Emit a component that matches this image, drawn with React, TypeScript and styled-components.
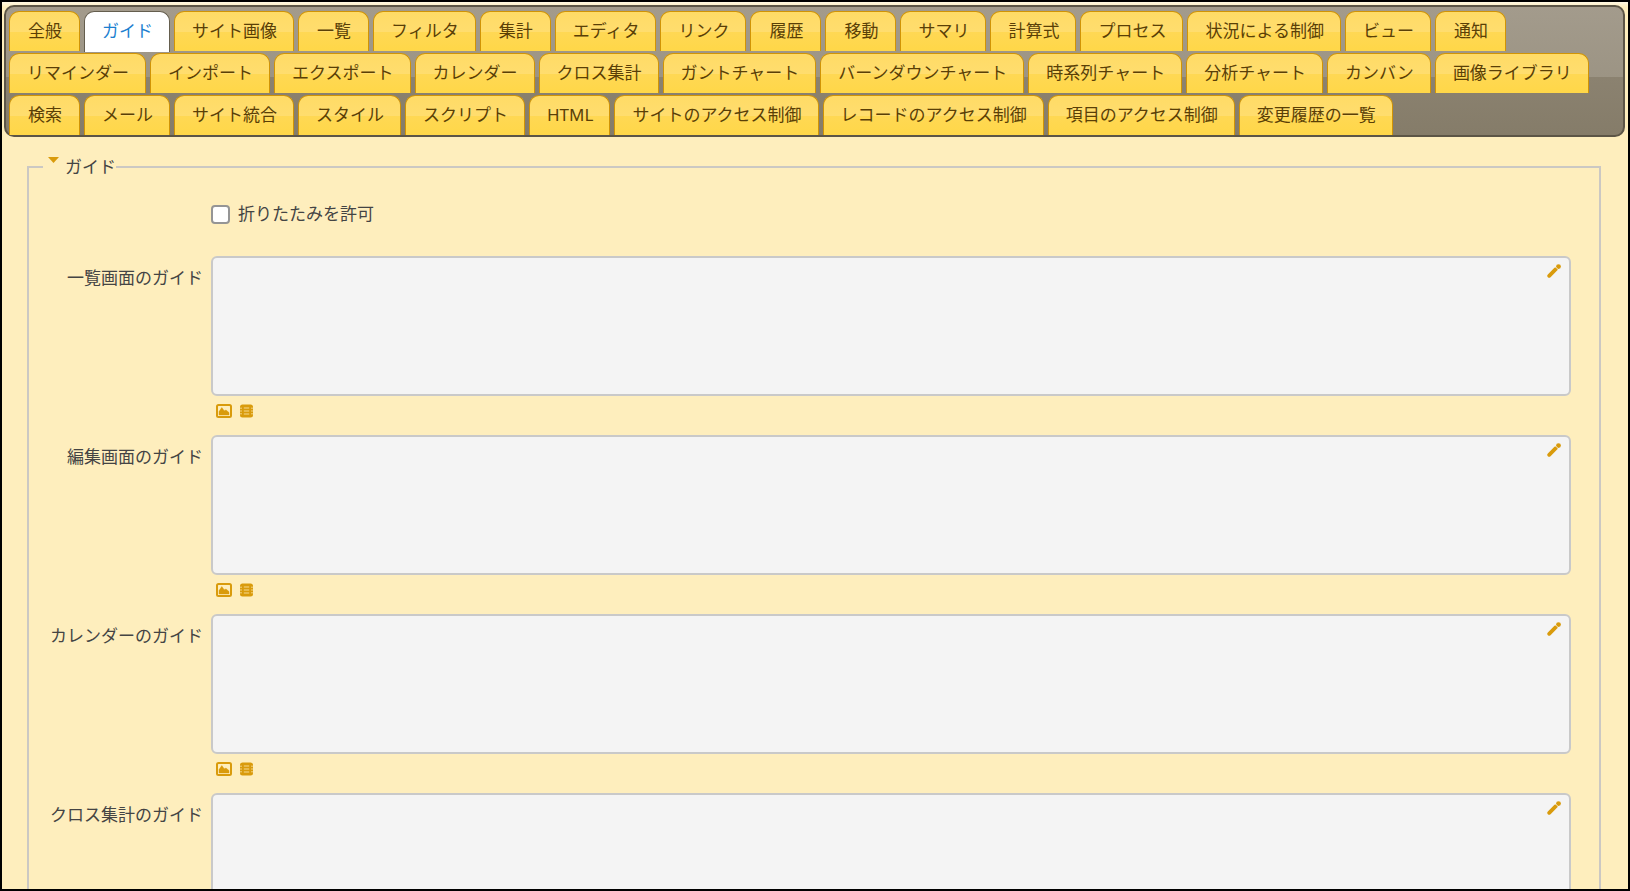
import React, { useState } from "react";
import styled, { createGlobalStyle } from "styled-components";

const GlobalStyle = createGlobalStyle`
  *, *::before, *::after { box-sizing: border-box; }
  body {
    margin: 0;
    background: #feeebd;
    color: #444;
    font-family: "Noto Sans", "Noto Sans CJK JP", sans-serif;
    font-size: 17px;
    line-height: 24px;
  }
`;

const Frame = styled.div`
  height: 100vh;
  overflow: hidden;
  padding: 3px 3px 0 2px;
  border: 2px solid #000;
  background: linear-gradient(#fff8e3 0, #feeebd 5px);
`;

const TabBar = styled.nav`
  display: flex;
  flex-wrap: wrap;
  gap: 2px 4px;
  padding: 4px 3px 0;
  border: 2px solid #5c5546;
  border-radius: 10px;
  background: linear-gradient(#a39b8c 0, #9c9484 55%, #8b8270 55%, #857c69 100%);
`;

const Tab = styled.a<{ $active: boolean }>`
  height: ${(p) => (p.$active ? 41 : 40)}px;
  min-width: 71px;
  margin-bottom: ${(p) => (p.$active ? -1 : 0)}px;
  padding: 7px 16px 0 17px;
  border: 1px solid ${(p) => (p.$active ? "#655e4e" : "#d19405")};
  border-bottom: 0;
  border-radius: 10px 10px 0 0;
  background: ${(p) =>
    p.$active
      ? "#fff"
      : "linear-gradient(#ffdb66 0, #ffdd6e 50%, #ffd854 51%, #ffd748 100%)"};
  color: ${(p) => (p.$active ? "#1c7fd0" : "#5a3f06")};
  text-align: center;
  text-decoration: none;
  white-space: nowrap;
`;

const Section = styled.fieldset`
  min-width: 0;
  margin: 18px 24px 0 23px;
  padding: 21px 28px 24px 14px;
  border: 2px solid #cbc8c3;
`;

const Legend = styled.legend`
  padding: 0;
`;

const Toggle = styled.button`
  display: flex;
  gap: 6px;
  padding: 0 0 0 5px;
  border: 0;
  background: none;
  color: inherit;
  font: inherit;
  cursor: pointer;

  svg {
    margin-top: 2px;
  }
`;

const CheckRow = styled.div`
  display: flex;
  align-items: center;
  gap: 8px;
  height: 28px;
  margin: 0 0 28px 168px;
`;

const Check = styled.input`
  width: 19px;
  height: 19px;
  margin: 0;
  appearance: none;
  border: 2px solid #959595;
  border-radius: 4px;
  background: #fff;

  &:checked {
    background: #0074c7;
  }
`;

const Field = styled.div`
  display: grid;
  grid-template-columns: 160px 1fr;
  column-gap: 8px;
  margin-bottom: 16px;
`;

const FieldLabel = styled.label`
  padding-top: 10px;
  text-align: right;
  white-space: nowrap;
`;

const Editor = styled.div`
  position: relative;
`;

const Area = styled.textarea`
  display: block;
  width: 100%;
  height: 140px;
  padding: 8px 32px 8px 8px;
  border: 2px solid #c9c9c9;
  border-radius: 6px;
  background: #f4f4f4;
  color: inherit;
  font: inherit;
  resize: none;
`;

const IconButton = styled.button`
  display: block;
  padding: 0;
  border: 0;
  background: none;
  color: #d99b0c;
  cursor: pointer;

  svg {
    display: block;
  }
`;

const EditButton = styled(IconButton)`
  position: absolute;
  top: 8px;
  right: 10px;
`;

const Attachments = styled.div`
  display: flex;
  gap: 8px;
  height: 23px;
  padding: 7px 0 0 5px;
`;

const PencilIcon = () => (
  <svg width="14" height="14" viewBox="0 0 14 14" fill="none" stroke="currentColor" aria-hidden="true">
    <path d="M2.2 11.8 8.8 5.2" strokeWidth="3.8" strokeLinecap="round" />
    <circle cx="11.5" cy="2.6" r="2.4" fill="currentColor" stroke="none" />
    <path d="m8.2 2.6 3.2 3.2" stroke="#f4f4f4" strokeWidth="0.8" />
  </svg>
);

const ImageIcon = () => (
  <svg width="16" height="14" viewBox="0 0 16 14" aria-hidden="true">
    <rect x="1" y="1" width="14" height="12" rx="1.5" fill="none" stroke="currentColor" strokeWidth="2" />
    <path d="M3 11V7.6L5.8 3.6 8.2 6.8 10 6 13 8.6V11Z" fill="currentColor" stroke="currentColor" strokeWidth="0.4" />
  </svg>
);

const FilmIcon = () => (
  <svg width="13" height="14" viewBox="0 0 13 14" aria-hidden="true">
    <rect x="0" y="0.5" width="13" height="13" rx="2.5" fill="currentColor" />
    <path d="M3.8 4h5.4M3.8 7h5.4M3.8 10h5.4" stroke="#f6d98e" strokeWidth="1" />
    <path d="M0 4.2h2M0 7h2M0 9.8h2M11 4.2h2M11 7h2M11 9.8h2" stroke="#f6d98e" strokeWidth="0.9" />
  </svg>
);

const TriangleIcon = () => (
  <svg width="11" height="6" viewBox="0 0 11 6" aria-hidden="true">
    <path d="M0 0H11L5.5 6Z" fill="#d99b0c" />
  </svg>
);

const tabs = [
  "全般", "ガイド", "サイト画像", "一覧", "フィルタ", "集計", "エディタ", "リンク",
  "履歴", "移動", "サマリ", "計算式", "プロセス", "状況による制御", "ビュー", "通知",
  "リマインダー", "インポート", "エクスポート", "カレンダー", "クロス集計",
  "ガントチャート", "バーンダウンチャート", "時系列チャート", "分析チャート",
  "カンバン", "画像ライブラリ", "検索", "メール", "サイト統合", "スタイル",
  "スクリプト", "HTML", "サイトのアクセス制御", "レコードのアクセス制御",
  "項目のアクセス制御", "変更履歴の一覧",
];

const guides = [
  { id: "grid-guide", label: "一覧画面のガイド" },
  { id: "editor-guide", label: "編集画面のガイド" },
  { id: "calendar-guide", label: "カレンダーのガイド" },
  { id: "crosstab-guide", label: "クロス集計のガイド" },
];

function GuideField({ id, label }: { id: string; label: string }) {
  return (
    <Field>
      <FieldLabel htmlFor={id}>{label}</FieldLabel>
      <Editor>
        <Area id={id} />
        <EditButton type="button" aria-label="編集">
          <PencilIcon />
        </EditButton>
        <Attachments>
          <IconButton type="button" aria-label="画像">
            <ImageIcon />
          </IconButton>
          <IconButton type="button" aria-label="動画">
            <FilmIcon />
          </IconButton>
        </Attachments>
      </Editor>
    </Field>
  );
}

export default function App() {
  const [active, setActive] = useState("ガイド");
  const [open, setOpen] = useState(true);

  return (
    <Frame>
      <GlobalStyle />
      <TabBar>
        {tabs.map((name) => (
          <Tab
            key={name}
            href="#"
            $active={name === active}
            aria-current={name === active ? "page" : undefined}
            onClick={(e) => {
              e.preventDefault();
              setActive(name);
            }}
          >
            {name}
          </Tab>
        ))}
      </TabBar>
      <Section>
        <Legend>
          <Toggle type="button" aria-expanded={open} onClick={() => setOpen(!open)}>
            <TriangleIcon />
            ガイド
          </Toggle>
        </Legend>
        {open && (
          <>
            <CheckRow>
              <Check type="checkbox" id="allow-collapse" />
              <label htmlFor="allow-collapse">折りたたみを許可</label>
            </CheckRow>
            {guides.map((g) => (
              <GuideField key={g.id} {...g} />
            ))}
          </>
        )}
      </Section>
    </Frame>
  );
}
